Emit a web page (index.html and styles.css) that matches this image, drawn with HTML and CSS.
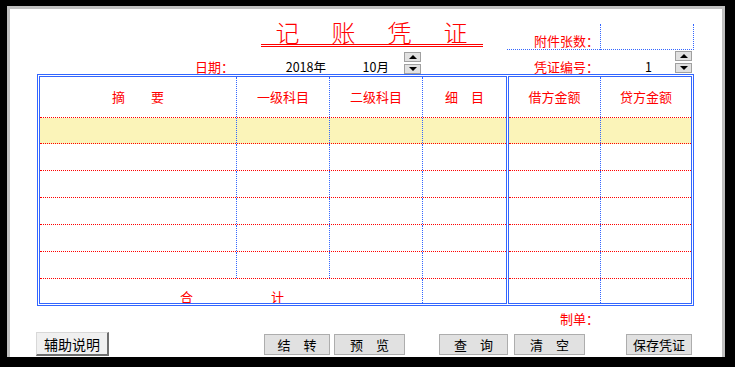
FILE: index.html
```html
<!DOCTYPE html>
<html lang="zh-CN">
<head>
  <meta charset="UTF-8">
  <meta name="viewport" content="width=device-width, initial-scale=1">
  <title>记账凭证</title>
  <link rel="stylesheet" href="styles.css">
</head>

<body>

  <div class="window">
    <div class="voucher">

      <div class="cols head-top">
        <div class="title-cell">
          <h1 class="title"><span>记</span><span>账</span><span>凭</span><span>证</span></h1>
        </div>
        <div class="label attach-label">附件张数：</div>
        <div class="attach-box"></div>
      </div>

      <div class="cols head-bottom">
        <div class="label date-label">日期：</div>
        <div class="value year">2018年</div>
        <div class="value month">
          <span>10月</span>
          <div class="spinner">
            <button class="spin"><i class="arrow-up"></i></button>
            <button class="spin"><i class="arrow-down"></i></button>
          </div>
        </div>
        <div></div>
        <div class="label no-label">凭证编号：</div>
        <div class="value number">
          <span class="number-text">1</span>
          <div class="spinner spinner-no">
            <button class="spin"><i class="arrow-up"></i></button>
            <button class="spin"><i class="arrow-down"></i></button>
          </div>
        </div>
      </div>

      <div class="sheet">
        <div class="box box-left">
          <div class="row row-head">
            <div class="cell">摘　　要</div>
            <div class="cell">一级科目</div>
            <div class="cell">二级科目</div>
            <div class="cell">细　目</div>
          </div>
          <div class="row row-active"><div class="cell"></div><div class="cell"></div><div class="cell"></div><div class="cell"></div></div>
          <div class="row"><div class="cell"></div><div class="cell"></div><div class="cell"></div><div class="cell"></div></div>
          <div class="row"><div class="cell"></div><div class="cell"></div><div class="cell"></div><div class="cell"></div></div>
          <div class="row"><div class="cell"></div><div class="cell"></div><div class="cell"></div><div class="cell"></div></div>
          <div class="row"><div class="cell"></div><div class="cell"></div><div class="cell"></div><div class="cell"></div></div>
          <div class="row"><div class="cell"></div><div class="cell"></div><div class="cell"></div><div class="cell"></div></div>
          <div class="row row-total">
            <div class="cell total-text"><span>合</span><span>计</span></div>
            <div class="cell"></div>
          </div>
        </div>

        <div class="box box-right">
          <div class="row row-head">
            <div class="cell">借方金额</div>
            <div class="cell">贷方金额</div>
          </div>
          <div class="row row-active"><div class="cell"></div><div class="cell"></div></div>
          <div class="row"><div class="cell"></div><div class="cell"></div></div>
          <div class="row"><div class="cell"></div><div class="cell"></div></div>
          <div class="row"><div class="cell"></div><div class="cell"></div></div>
          <div class="row"><div class="cell"></div><div class="cell"></div></div>
          <div class="row"><div class="cell"></div><div class="cell"></div></div>
          <div class="row row-total"><div class="cell"></div><div class="cell"></div></div>
        </div>
      </div>

      <div class="cols maker-row">
        <div class="label maker-label">制单：</div>
      </div>

      <div class="actions">
        <button class="btn btn-raised">辅助说明</button>
        <div class="btn-group group-edit">
          <button class="btn btn-flat btn-narrow">结　转</button>
          <button class="btn btn-flat">预　览</button>
        </div>
        <div class="btn-group group-query">
          <button class="btn btn-flat btn-mid">查　询</button>
          <button class="btn btn-flat">清　空</button>
        </div>
        <button class="btn btn-flat btn-narrow btn-save">保存凭证</button>
      </div>

    </div>
  </div>

</body>
</html>
```

FILE: styles.css
```css
* {
  margin: 0;
  padding: 0;
  box-sizing: border-box;
}

body {
  background: #000;
  font-family: "Noto Sans CJK SC", "Liberation Sans", sans-serif;
  font-size: 12.5px;
  color: #000;
}

.window {
  margin: 6px 0 0 7px;
  width: 718px;
  height: 351px;
  background: #fff;
  border-top: 3px solid #c0c0c0;
  border-left: 3px solid #c0c0c0;
  border-right: 3px solid #c0c0c0;
}

.voucher {
  padding-left: 27px;
}

/* shared column grid, lines up with the table columns */
.cols {
  display: grid;
  grid-template-columns: 199px 93px 93px 85px 93px 94px;
}

.label {
  color: #ff0000;
  font-size: 13px;
  line-height: 14px;
  text-align: right;
  padding-right: 1px;
}

/* header */
.head-top {
  height: 41px;
}

.title-cell {
  grid-column: 2 / 5;
  justify-self: center;
  margin-top: 11px;
}

.title {
  display: flex;
  gap: 32px;
  padding: 0 15px;
  font-size: 24px;
  font-weight: 300;
  line-height: 24px;
  color: #ff0000;
  border-bottom: 3px double #ff0000;
}

.attach-label {
  grid-column: 5;
  align-self: end;
  padding-bottom: 1px;
  border-bottom: 1px dotted #3366ff;
}

.attach-box {
  grid-column: 6;
  align-self: end;
  height: 26px;
  border-left: 1px dotted #3366ff;
  border-right: 1px dotted #3366ff;
  border-bottom: 1px dotted #3366ff;
}

.head-bottom {
  height: 24px;
  align-items: end;
}

.date-label {
  padding-right: 2px;
}

.value {
  line-height: 14px;
}

.year {
  text-align: right;
  padding-right: 3px;
}

.month {
  display: flex;
  justify-content: flex-end;
  align-items: flex-end;
  padding-right: 1px;
}

.month .spinner {
  margin-left: 15px;
}

.number {
  display: flex;
  align-items: flex-end;
}

.number-text {
  margin-left: 45px;
}

.spinner {
  display: flex;
  flex-direction: column;
  gap: 2px;
}

.spinner-no {
  margin-left: auto;
  margin-right: 2px;
  margin-bottom: 1px;
}

.spin {
  width: 17px;
  height: 10px;
  border: 1px solid #a0a0a0;
  background: #e1e1e1;
  display: flex;
  align-items: center;
  justify-content: center;
}

.arrow-up {
  border-left: 4px solid transparent;
  border-right: 4px solid transparent;
  border-bottom: 4px solid #000;
}

.arrow-down {
  border-left: 4px solid transparent;
  border-right: 4px solid transparent;
  border-top: 4px solid #000;
}

/* table */
.sheet {
  display: flex;
  gap: 1px;
  width: 657px;
  padding: 1px;
  border: 1px solid #3366ff;
}

.box {
  border: 1px solid #3366ff;
}

.box-left {
  width: 468px;
}

.box-right {
  width: 184px;
}

.row {
  display: grid;
  height: 27px;
  border-bottom: 1px dotted #ff0000;
}

.box-left .row {
  grid-template-columns: 196px 93px 93px 84px;
}

.box-right .row {
  grid-template-columns: 91px 91px;
}

.cell + .cell {
  border-left: 1px dotted #3366ff;
}

.row-head {
  height: 41px;
}

.row-head .cell {
  color: #ff0000;
  font-size: 13px;
  text-align: center;
  line-height: 40px;
}

.row-active {
  height: 26px;
  background: #fbf4b9;
}

.row-total {
  height: 24px;
  border-bottom: none;
}

.box-left .row-total {
  grid-template-columns: 382px 84px;
}

.total-text {
  display: flex;
  gap: 78px;
  padding: 11px 0 0 140px;
  color: #ff0000;
  font-size: 13px;
  line-height: 14px;
  overflow: hidden;
}

/* footer */
.maker-row {
  margin-top: 6px;
}

.maker-label {
  grid-column: 5;
}

.actions {
  display: flex;
  align-items: flex-start;
  margin-top: 6px;
}

.btn {
  font-family: "Noto Sans CJK SC", "Liberation Sans", sans-serif;
  color: #000;
  cursor: pointer;
}

.btn-raised {
  margin-left: -1px;
  width: 73px;
  height: 24px;
  font-size: 14px;
  background: #f0f0f0;
  border-top: 1px solid #d8d8d8;
  border-left: 1px solid #d8d8d8;
  border-right: 2px solid #6e6e6e;
  border-bottom: 2px solid #6e6e6e;
}

.btn-flat {
  width: 71px;
  height: 21px;
  font-size: 13px;
  background: #e1e1e1;
  border: 1px solid #adadad;
}

.btn-narrow {
  width: 66px;
}

.btn-mid {
  width: 69px;
}

.btn-group {
  display: flex;
  margin-top: 2px;
}

.group-edit {
  margin-left: 155px;
  gap: 4px;
}

.group-query {
  margin-left: 34px;
  gap: 6px;
}

.btn-save {
  margin-top: 2px;
  margin-left: 41px;
}
```
